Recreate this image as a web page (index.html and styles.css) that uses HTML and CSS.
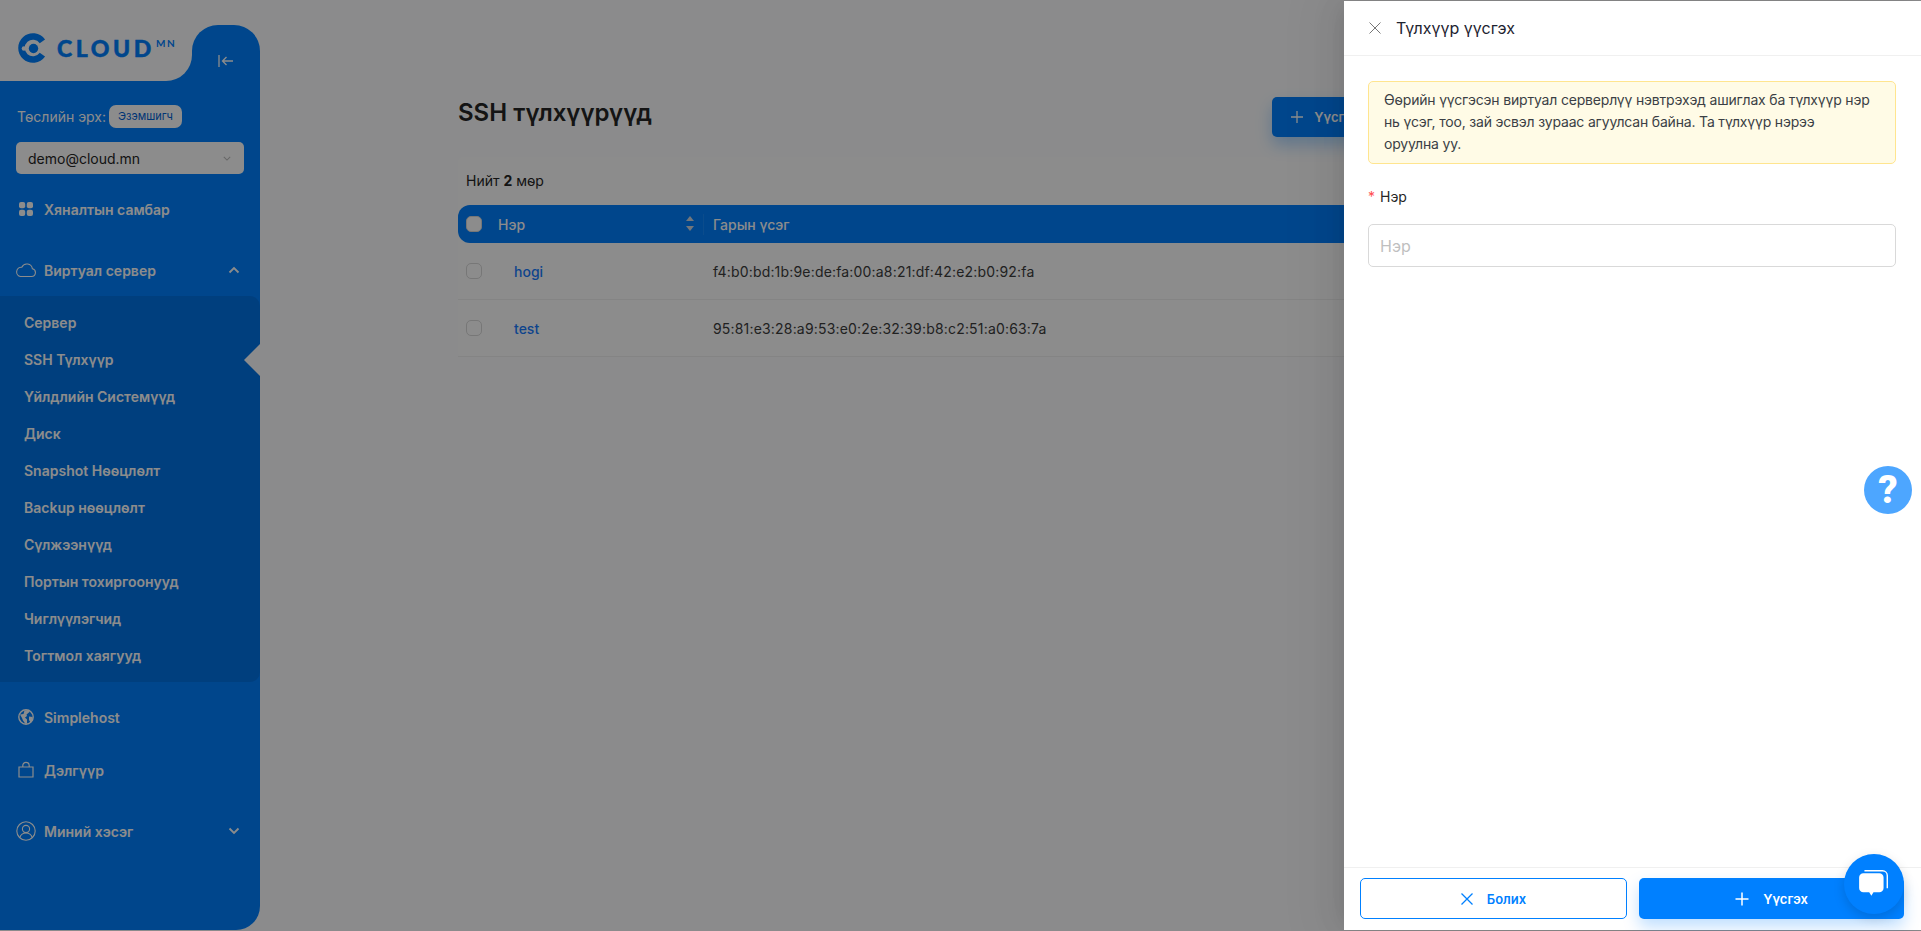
FILE: index.html
```html
<!DOCTYPE html>
<html>
<head>
  <title>SSH түлхүүрүүд</title>
  <link rel="stylesheet" href="styles.css">
</head>
<body>
  <div class="layout">
    <aside class="sidebar">
      <div class="sidebar-top">
        <div class="logo-box">
          <svg class="logo-mark" viewBox="0 0 30 30" width="30" height="30">
            <path d="M24.4 8.400A11.500 11.500 0 1 0 24.400 21.600" fill="none" stroke="#0080ff" stroke-width="6.500"/>
            <circle cx="6" cy="15.500" r="2.300" fill="#fdfeff"/>
            <circle cx="15.500" cy="15.500" r="4.700" fill="#0080ff"/>
          </svg>
          <span class="logo-text">CLOUD</span><span class="logo-sup">MN</span>
        </div>
        <div class="toggle-tab">
          <svg viewBox="0 0 16 14" width="16" height="14" fill="none" stroke="#fff" stroke-width="1.3">
            <path d="M1 1v12M15 7H4.5M8.5 3 4.5 7l4 4"/>
          </svg>
        </div>
      </div>

      <div class="sidebar-body">
        <div class="role">Төслийн эрх: <span class="role-badge">Эзэмшигч</span></div>
        <div class="project-select">
          <span>demo@cloud.mn</span>
          <svg viewBox="0 0 10 6" width="8" height="5" fill="none" stroke="#bbb" stroke-width="1.3"><path d="M1 1l4 4 4-4"/></svg>
        </div>

        <a class="menu-item menu-dashboard">
          <svg class="menu-icon" viewBox="0 0 20 20" width="20" height="20" fill="#fff">
            <rect x="3" y="3" width="6.2" height="6.2" rx="2"/><rect x="10.8" y="3" width="6.2" height="6.2" rx="2"/>
            <rect x="3" y="10.8" width="6.2" height="6.2" rx="2"/><rect x="10.8" y="10.8" width="6.2" height="6.2" rx="2"/>
          </svg>
          Хяналтын самбар
        </a>

        <a class="menu-item menu-server">
          <svg class="menu-icon" viewBox="0 0 20 20" width="20" height="20" fill="none" stroke="#fff" stroke-width="1.100">
            <path d="M4.500 16.500h11a3.900 3.900 0 0 0 .9-7.700A5.600 5.600 0 0 0 5.800 7.200 4.700 4.700 0 0 0 4.500 16.500z"/>
          </svg>
          Виртуал сервер
          <svg class="menu-chevron" viewBox="0 0 12 8" width="12" height="8" fill="none" stroke="#fff" stroke-width="1.8"><path d="M1.5 6.5 6 2l4.5 4.5"/></svg>
        </a>

        <div class="submenu">
          <a class="submenu-item">Сервер</a>
          <a class="submenu-item active">SSH Түлхүүр</a>
          <a class="submenu-item">Үйлдлийн Системүүд</a>
          <a class="submenu-item">Диск</a>
          <a class="submenu-item">Snapshot Нөөцлөлт</a>
          <a class="submenu-item">Backup нөөцлөлт</a>
          <a class="submenu-item">Сүлжээнүүд</a>
          <a class="submenu-item">Портын тохиргоонууд</a>
          <a class="submenu-item">Чиглүүлэгчид</a>
          <a class="submenu-item">Тогтмол хаягууд</a>
        </div>

        <a class="menu-item menu-simple">
          <svg class="menu-icon" viewBox="0 0 20 20" width="20" height="20">
            <circle cx="10" cy="10" r="7.2" fill="none" stroke="#fff" stroke-width="1.4"/>
            <path d="M4 7.5l3.5-.5 1-3.5 4-.5 1 2-3 2.5.5 1.5-2 1.5 2 2v4l-1.5.5-2.5-3.5-1-2.500zM13 9.500l3.500.5.500 3-2.500 2.500-1.500-2.500z" fill="#fff"/>
          </svg>
          Simplehost
        </a>
        <a class="menu-item menu-shop">
          <svg class="menu-icon" viewBox="0 0 20 20" width="20" height="20" fill="none" stroke="#fff" stroke-width="1.2">
            <path d="M3 7h14v10H3zM6.800 7V5.500a3.200 3.200 0 0 1 6.400 0V7"/>
          </svg>
          Дэлгүүр
        </a>
        <a class="menu-item menu-profile">
          <svg class="menu-icon" viewBox="0 0 20 20" width="20" height="20" fill="none" stroke="#fff" stroke-width="1.1">
            <circle cx="10" cy="10" r="9.200"/><circle cx="10" cy="8" r="3.600"/><path d="M3.800 16.500c1-3 3.500-4.500 6.200-4.500s5.200 1.500 6.200 4.500"/>
          </svg>
          Миний хэсэг
          <svg class="menu-chevron" viewBox="0 0 12 8" width="12" height="8" fill="none" stroke="#fff" stroke-width="1.8"><path d="M1.500 1.500 6 6l4.500-4.500"/></svg>
        </a>
      </div>
    </aside>

    <main class="content">
      <div class="page-head">
        <h1>SSH түлхүүрүүд</h1>
        <button class="btn-create">
          <svg viewBox="0 0 14 14" width="14" height="14" stroke="#fff" stroke-width="1.300"><path d="M7 1v12M1 7h12"/></svg>
          Үүсгэх
        </button>
      </div>

      <div class="card">
        <div class="total">Нийт <b>2</b> мөр</div>
        <div class="table-row table-head">
          <span class="check check-head"></span>
          <span class="col-name">Нэр <i class="sort"></i></span>
          <span>Гарын үсэг</span>
        </div>
        <div class="table-row">
          <span class="check"></span>
          <a class="col-name key-link">hogi</a>
          <span class="fingerprint">f4:b0:bd:1b:9e:de:fa:00:a8:21:df:42:e2:b0:92:fa</span>
        </div>
        <div class="table-row">
          <span class="check"></span>
          <a class="col-name key-link">test</a>
          <span class="fingerprint">95:81:e3:28:a9:53:e0:2e:32:39:b8:c2:51:a0:63:7a</span>
        </div>
      </div>
    </main>
  </div>

  <div class="mask"></div>

  <section class="drawer">
    <header class="drawer-head">
      <svg viewBox="0 0 12 12" width="12" height="12" fill="none" stroke="#777" stroke-width="1"><path d="M.5.500l11 11M11.500.500l-11 11"/></svg>
      <span>Түлхүүр үүсгэх</span>
    </header>
    <div class="drawer-body">
      <div class="alert">Өөрийн үүсгэсэн виртуал серверлүү нэвтрэхэд ашиглах ба түлхүүр нэр нь үсэг, тоо, зай эсвэл зураас агуулсан байна. Та түлхүүр нэрээ<br>оруулна уу.</div>
      <label class="field-label"><span class="req">*</span>Нэр</label>
      <input class="field-input" type="text" placeholder="Нэр">
    </div>
    <footer class="drawer-foot">
      <button class="btn btn-cancel">
        <svg viewBox="0 0 12 12" width="12" height="12" fill="none" stroke="#0080ff" stroke-width="1.300"><path d="M.5.500l11 11M11.500.500l-11 11"/></svg>
        Болих
      </button>
      <button class="btn btn-submit">
        <svg viewBox="0 0 14 14" width="14" height="14" stroke="#fff" stroke-width="1.500"><path d="M7 .5v13M.5 7h13"/></svg>
        Үүсгэх
      </button>
    </footer>
  </section>

  <div class="help-btn">?</div>
  <div class="chat-btn">
    <svg viewBox="0 0 32 28" width="34" height="30" fill="#fff">
      <path d="M6 3.800h15a4 4 0 0 1 4 4v10a4 4 0 0 1-4 4h-5.500L13.500 25l-2-3.200H6a4 4 0 0 1-4-4v-10a4 4 0 0 1 4-4z"/>
      <path d="M7 1.500h17a4.500 4.500 0 0 1 4.500 4.500v12" fill="none" stroke="#fff" stroke-width="1.300"/>
    </svg>
  </div>
</body>
</html>
```

FILE: styles.css
```css
html, body {
  height: 931px;
  margin: 0;
  overflow: hidden;
}

body {
  font-family: Inter, "Noto Sans", sans-serif;
  font-size: 14px;
  color: #262626;
  background-color: #fdfeff;
  position: relative;
}

.layout {
  display: flex;
  height: 930px;
  box-sizing: border-box;
  padding-top: 1px;
}

/* Sidebar */
.sidebar {
  width: 260px;
  flex-shrink: 0;
  display: flex;
  flex-direction: column;
  color: #fff;
}

.sidebar-top {
  display: flex;
  height: 80px;
  background: linear-gradient(#0080ff, #0080ff) no-repeat right bottom / 94px 28px;
}

.logo-box {
  width: 192px;
  background-color: #fdfeff;
  border-bottom-right-radius: 26px;
  display: flex;
  align-items: flex-start;
  padding: 32px 0 0 18px;
  box-sizing: border-box;
  color: #0080ff;
}

.logo-mark {
  flex-shrink: 0;
}

.logo-text {
  font-family: Lato, sans-serif;
  font-weight: 900;
  font-size: 23px;
  line-height: 24px;
  letter-spacing: 3.6px;
  margin: 3px 0 0 9px;
  -webkit-text-stroke: 0.5px #0080ff;
}

.logo-sup {
  font-family: Lato, sans-serif;
  font-weight: 700;
  font-size: 10px;
  line-height: 10px;
  letter-spacing: 1.5px;
  margin: 5px 0 0 1px;
}

.toggle-tab {
  flex: 1;
  margin-top: 24px;
  background-color: #0080ff;
  border-radius: 26px 26px 0 0;
  display: flex;
  justify-content: center;
  padding-top: 29px;
  box-sizing: border-box;
}

.sidebar-body {
  flex: 1;
  background-color: #0080ff;
  border-bottom-right-radius: 24px;
  padding-top: 24px;
}

.role {
  display: flex;
  align-items: center;
  gap: 3px;
  height: 23px;
  padding-left: 17px;
  font-size: 14px;
}

.role-badge {
  background-color: #fff;
  color: #0062d6;
  font-size: 11px;
  line-height: 23px;
  padding: 0 9px;
  border-radius: 7px;
}

.project-select {
  display: flex;
  justify-content: space-between;
  align-items: center;
  width: 228px;
  height: 32px;
  margin: 14px 0 0 16px;
  padding: 0 13px 0 12px;
  box-sizing: border-box;
  background-color: #fff;
  border-radius: 5px;
  color: #262626;
  font-size: 14px;
}

.menu-item {
  display: flex;
  align-items: center;
  height: 24px;
  font-weight: 600;
  font-size: 14px;
  position: relative;
}

.menu-icon {
  width: 20px;
  height: 20px;
  margin: 0 8px 0 16px;
  flex-shrink: 0;
}

.menu-chevron {
  position: absolute;
  left: 228px;
  top: 8px;
}

.menu-dashboard { margin-top: 23px; }
.menu-server { margin-top: 37px; }
.menu-simple { margin-top: 23px; }
.menu-shop { margin-top: 29px; }
.menu-profile { margin-top: 37px; }

.submenu {
  margin-top: 14px;
  height: 386px;
  padding-top: 8px;
  box-sizing: border-box;
  background-color: #0073e6;
  border-radius: 0 10px 10px 0;
}

.submenu-item {
  display: flex;
  align-items: center;
  height: 37px;
  padding-left: 24px;
  font-weight: 600;
  font-size: 14px;
  position: relative;
}

.submenu-item.active::after {
  content: "";
  position: absolute;
  right: 0;
  top: 2.500px;
  border-style: solid;
  border-width: 16px 16px 16px 0;
  border-color: transparent #fdfeff transparent transparent;
}

/* Main content */
.content {
  flex: 1;
  padding: 96px 544px 0 198px;
}

.page-head {
  display: flex;
  justify-content: space-between;
  align-items: center;
  height: 40px;
}

h1 {
  margin: -10px 0 0;
  font-size: 24px;
  font-weight: 600;
  color: #262626;
}

.btn-create {
  display: flex;
  align-items: center;
  gap: 10px;
  height: 40px;
  padding: 0 18px;
  border: none;
  border-radius: 5px;
  background-color: #0080ff;
  color: #fff;
  font-family: inherit;
  font-size: 13px;
  font-weight: 600;
  box-shadow: 0 8px 16px rgba(0, 128, 255, 0.3);
}

.card {
  margin-top: 20px;
  background-color: #fff;
  border-radius: 5px;
  height: 200px;
}

.total {
  height: 48px;
  line-height: 48px;
  padding-left: 8px;
}

.table-row {
  display: grid;
  grid-template-columns: 32px 215px 1fr;
  align-items: center;
  height: 57px;
  padding-left: 8px;
  border-bottom: 1px solid #f0f0f0;
  box-sizing: border-box;
}

.table-head {
  height: 38px;
  border: none;
  background-color: #0080ff;
  border-radius: 12px 0 0 12px;
  color: #fff;
  font-weight: 500;
}

.check {
  width: 16px;
  height: 16px;
  border: 1px solid #d9d9d9;
  border-radius: 5px;
  box-sizing: border-box;
}

.check-head {
  background-color: #fff;
}

.col-name {
  position: relative;
  padding-right: 24px;
}

.table-head .col-name::after {
  content: "";
  position: absolute;
  left: 205px;
  top: -2px;
  bottom: -2px;
  width: 1px;
  background-color: rgba(255, 255, 255, 0.08);
}

.key-link {
  color: #1a7dff;
  padding-left: 16px;
  font-weight: 500;
}

.fingerprint {
  color: #3c3c3c;
  letter-spacing: 0.18px;
}

.sort {
  position: absolute;
  left: 188px;
  top: 0;
  width: 0;
  height: 0;
  border-left: 4px solid transparent;
  border-right: 4px solid transparent;
  border-bottom: 5px solid #d0d8e0;
}

.sort::after {
  content: "";
  position: absolute;
  left: -4px;
  top: 10px;
  border-left: 4px solid transparent;
  border-right: 4px solid transparent;
  border-top: 5px solid #d0d8e0;
}

/* Overlay */
.mask {
  position: absolute;
  left: 0;
  top: 0;
  right: 0;
  bottom: 0;
  background-color: rgba(0, 0, 0, 0.45);
}

.drawer {
  position: absolute;
  left: 1344px;
  top: 1px;
  bottom: 1px;
  right: 0;
  background-color: #fff;
  display: flex;
  flex-direction: column;
  box-shadow: -6px 0 16px -8px rgba(0, 0, 0, 0.08), -9px 0 28px 0 rgba(0, 0, 0, 0.05), -12px 0 48px 16px rgba(0, 0, 0, 0.03);
}

.drawer-head {
  display: flex;
  align-items: center;
  gap: 15px;
  height: 55px;
  padding-left: 25px;
  box-sizing: border-box;
  border-bottom: 1px solid #f0f0f0;
  font-size: 16px;
  font-weight: 400;
  color: #1d2330;
}

.drawer-body {
  flex: 1;
  padding: 25px 25px 0 24px;
}

.alert {
  height: 83px;
  box-sizing: border-box;
  padding: 7px 15px;
  background-color: #fffbe6;
  border: 1px solid #ffe58f;
  border-radius: 5px;
  line-height: 22px;
  color: #3b3f45;
  letter-spacing: -0.18px;
}

.field-label {
  display: block;
  margin-top: 22px;
  height: 22px;
  line-height: 22px;
  color: #262626;
}

.req {
  color: #ff4d4f;
  margin-right: 5px;
}

.field-input {
  display: block;
  width: 100%;
  height: 43px;
  margin-top: 16px;
  box-sizing: border-box;
  padding: 0 11px;
  border: 1px solid #d9d9d9;
  border-radius: 5px;
  font-family: inherit;
  font-size: 16px;
  outline: none;
}

.field-input::placeholder {
  color: #bfbfbf;
}

.drawer-foot {
  display: flex;
  gap: 12px;
  height: 63px;
  padding: 10px 17px 0 16px;
  box-sizing: border-box;
  border-top: 1px solid #f0f0f0;
}

.btn {
  flex: 1;
  display: flex;
  align-items: center;
  justify-content: center;
  gap: 14px;
  height: 41px;
  border-radius: 5px;
  font-family: inherit;
  font-size: 13px;
  font-weight: 600;
}

.btn-cancel {
  background-color: #fff;
  border: 1px solid #0080ff;
  color: #0080ff;
}

.btn-submit {
  background-color: #0080ff;
  border: none;
  color: #fff;
  box-shadow: 0 8px 16px rgba(0, 128, 255, 0.25);
}

.help-btn {
  position: absolute;
  left: 1864px;
  top: 466px;
  width: 48px;
  height: 48px;
  border-radius: 50%;
  background-color: #4da6ff;
  color: #fff;
  font-family: Roboto, sans-serif;
  font-weight: 900;
  font-size: 38px;
  line-height: 48px;
  text-align: center;
}

.chat-btn {
  position: absolute;
  left: 1844px;
  top: 854px;
  width: 60px;
  height: 60px;
  border-radius: 50%;
  background-color: #0080ff;
  box-shadow: 0 4px 12px rgba(0, 0, 0, 0.15);
  display: flex;
  align-items: center;
  justify-content: center;
}
```
